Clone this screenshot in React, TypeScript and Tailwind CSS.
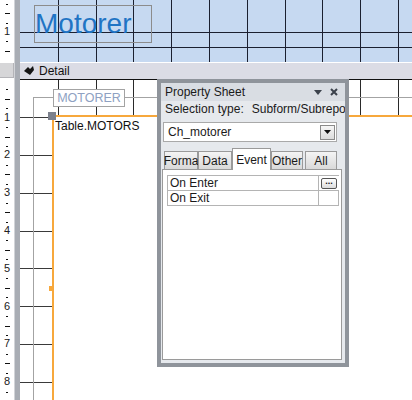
import React from 'react';

/**
 * Access form designer: header section, detail section with a subform,
 * and the floating Property Sheet.
 */

const CM = 37.8;
const STEP = CM / 4;

// ruler marks between two page y values
function rulerMarks(origin: number, from: number, to: number) {
  const marks: { y: number; kind: 'num' | 'long' | 'short'; n: number }[] = [];
  for (let i = 1; i < 60; i++) {
    const y = origin + i * STEP;
    if (y < from || y > to) continue;
    const kind = i % 4 === 0 ? 'num' : i % 4 === 2 ? 'long' : 'short';
    marks.push({ y, kind, n: i / 4 });
  }
  return marks;
}

function Ruler() {
  const marks = [...rulerMarks(-5.8, 0, 60), ...rulerMarks(79.8, 80, 400)];
  return (
    <div className="relative w-[20px] h-full flex shrink-0">
      <div className="w-[14px] h-full bg-white" />
      <div className="w-[6px] h-full bg-[#a9adb4] border-l border-[#d2d4d8]" />
      {/* section separator block */}
      <div className="absolute left-0 top-[63px] w-[14px] h-[15px] bg-[#d6d6d8] border-r border-b border-[#b4b4b8]" />
      {marks.map((m, i) =>
        m.kind === 'num' ? (
          <span
            key={i}
            className="absolute left-0 w-[14px] text-center text-[11px] leading-[11px] text-[#202020]"
            style={{ top: m.y - 6 }}
          >
            {m.n}
          </span>
        ) : (
          <div
            key={i}
            className={`absolute h-px bg-[#111] ${m.kind === 'long' ? 'left-[5px] w-[5px]' : 'left-[6px] w-[2px]'}`}
            style={{ top: Math.round(m.y) }}
          />
        )
      )}
    </div>
  );
}

function HeaderSection() {
  return (
    <div className="relative h-[62px] bg-[#c6d9f1] overflow-hidden">
      {Array.from({ length: 10 }, (_, k) => (
        <div
          key={k}
          className="absolute top-0 w-px h-full bg-[#1b2030]"
          style={{ left: Math.round(CM * (k + 1)) }}
        />
      ))}
      <div className="absolute left-0 right-0 top-[32px] h-px bg-[#1b2030]" />
      <div className="absolute left-0 right-0 top-[47px] h-px bg-[#1b2030]" />
      <div className="absolute left-[14px] top-[5px] w-[118px] h-[38px] border border-[#8c8c8c] pt-[4px]">
        <span className="block text-[28px] leading-none text-[#1f74c4]">Motorer</span>
      </div>
    </div>
  );
}

function DetailBar() {
  return (
    <div className="h-[16px] mt-px bg-[#dbdce5] flex items-center gap-[4px] pl-[4px]">
      <svg width="11" height="10" viewBox="0 0 11 10">
        <path d="M0 5 L4 1 L6 3 L9 0 L10 4 L6 9 Z" fill="#151515" />
      </svg>
      <span className="text-[12px] leading-none text-[#111]">Detail</span>
    </div>
  );
}

function DetailSection() {
  return (
    <div className="relative flex-1 bg-white border-t border-[#111] overflow-hidden">
      {/* grid above the subform */}
      {Array.from({ length: 10 }, (_, k) => (
        <div
          key={k}
          className="absolute top-0 w-px h-[36px] bg-[#2a2a2a]"
          style={{ left: Math.round(CM * (k + 1)) }}
        />
      ))}
      {Array.from({ length: 8 }, (_, k) => (
        <div
          key={k}
          className="absolute left-0 w-[32px] h-px bg-[#3a3a3a]"
          style={{ top: Math.round(CM * (k + 1) - 0.6) }}
        />
      ))}
      {/* subform frame */}
      <div className="absolute left-[13px] top-[17px] right-0 bottom-0 border-l border-t border-[#a3a3a3]" />
      {/* subform body */}
      <div className="absolute left-[32px] top-[35px] right-0 bottom-0 bg-white border-l-2 border-t-2 border-[#f7a83c]">
        <span className="block pl-[1px] pt-[2px] text-[12px] leading-[14px] text-[#111]">Table.MOTORS</span>
      </div>
      <div className="absolute left-[28px] top-[32px] w-[8px] h-[8px] bg-[#7c818d]" />
      <div className="absolute left-[29px] top-[206px] w-[3px] h-[5px] bg-[#f7a83c]" />
      {/* label */}
      <div className="absolute left-[33px] top-[9px] w-[72px] h-[18px] bg-white border border-[#a3a3a3] flex items-center justify-center">
        <span className="text-[12.5px] leading-none text-[#8ea1c2]">MOTORER</span>
      </div>
    </div>
  );
}

const tabs = [
  { label: 'Forma', w: 'w-[34px]' },
  { label: 'Data', w: 'w-[34px]' },
  { label: 'Event', w: 'w-[39px]', active: true },
  { label: 'Other', w: 'w-[32px]' },
  { label: 'All', w: 'w-[32px] ml-[2px]' },
];

function PropertySheet() {
  return (
    <div className="absolute left-[157px] top-[79px] w-[192px] h-[288px] border-4 border-[#8f949b] bg-[#e6e9ed] flex flex-col text-[12px] text-[#1a1a1a]">
      <div className="h-[18px] bg-[#d9dde3] flex items-center justify-between pl-[4px] pr-[7px]">
        <span className="leading-none">Property Sheet</span>
        <div className="flex items-center gap-[8px]">
          <svg width="8" height="5" viewBox="0 0 8 5">
            <path d="M0 0 H8 L4 5 Z" fill="#3c424c" />
          </svg>
          <svg width="8" height="8" viewBox="0 0 8 8">
            <path d="M1 1 L7 7 M7 1 L1 7" stroke="#3c424c" strokeWidth="2" />
          </svg>
        </div>
      </div>
      <div className="h-[16px] flex items-center pl-[4px] whitespace-nowrap overflow-hidden">
        <span className="leading-none">Selection type:</span>
        <span className="leading-none ml-[8px]">Subform/Subreport</span>
      </div>
      <div className="mt-[5px] ml-[2px] w-[174px] h-[20px] bg-white border border-[#a9a9a9] flex items-center justify-between pl-[4px] pr-[1px]">
        <span className="leading-none">Ch_motorer</span>
        <div className="w-[15px] h-[15px] border border-[#8a8a8a] bg-gradient-to-b from-[#f6f6f6] to-[#dcdcdc] flex items-center justify-center">
          <svg width="7" height="4" viewBox="0 0 7 4">
            <path d="M0 0 H7 L3.5 4 Z" fill="#111" />
          </svg>
        </div>
      </div>
      <div className="mt-[6px] ml-[3px] h-[21px] flex items-end relative z-10">
        {tabs.map((t) =>
          t.active ? (
            <div
              key={t.label}
              className={`${t.w} h-[22px] -mb-px bg-white border border-b-0 border-[#9a9a9a] flex items-center justify-center`}
            >
              <span className="leading-none">{t.label}</span>
            </div>
          ) : (
            <div
              key={t.label}
              className={`${t.w} h-[18px] bg-gradient-to-b from-[#f4f4f4] to-[#d9d9d9] border border-b-0 border-[#9a9a9a] flex items-center justify-center`}
            >
              <span className="leading-none">{t.label}</span>
            </div>
          )
        )}
      </div>
      <div className="ml-px w-[180px] h-[191px] bg-white border border-[#9a9a9a] pl-[4px] pt-[5px]">
        <div className="w-[172px] border-t border-l border-[#b4b4b4]">
          <div className="h-[15px] flex border-b border-[#b4b4b4]">
            <div className="w-[151px] pl-[2px] flex items-center border-r border-[#b4b4b4]">
              <span className="leading-none">On Enter</span>
            </div>
            <div className="flex-1 flex items-center justify-center">
              <div className="w-[16px] h-[11px] rounded-[2px] border border-[#555] bg-gradient-to-b from-white to-[#dcdcdc] flex items-center justify-center">
                <span className="text-[9px] leading-none font-bold -mt-[3px]">...</span>
              </div>
            </div>
          </div>
          <div className="h-[15px] flex border-b border-r border-[#b4b4b4]">
            <div className="w-[151px] pl-[2px] flex items-center border-r border-[#b4b4b4]">
              <span className="leading-none">On Exit</span>
            </div>
          </div>
        </div>
      </div>
    </div>
  );
}

export default function App() {
  return (
    <div className="relative w-[412px] h-[400px] overflow-hidden bg-white flex font-['Liberation_Sans',Arial,sans-serif]">
      <Ruler />
      <div className="flex-1 flex flex-col">
        <HeaderSection />
        <DetailBar />
        <DetailSection />
      </div>
      <PropertySheet />
    </div>
  );
}
